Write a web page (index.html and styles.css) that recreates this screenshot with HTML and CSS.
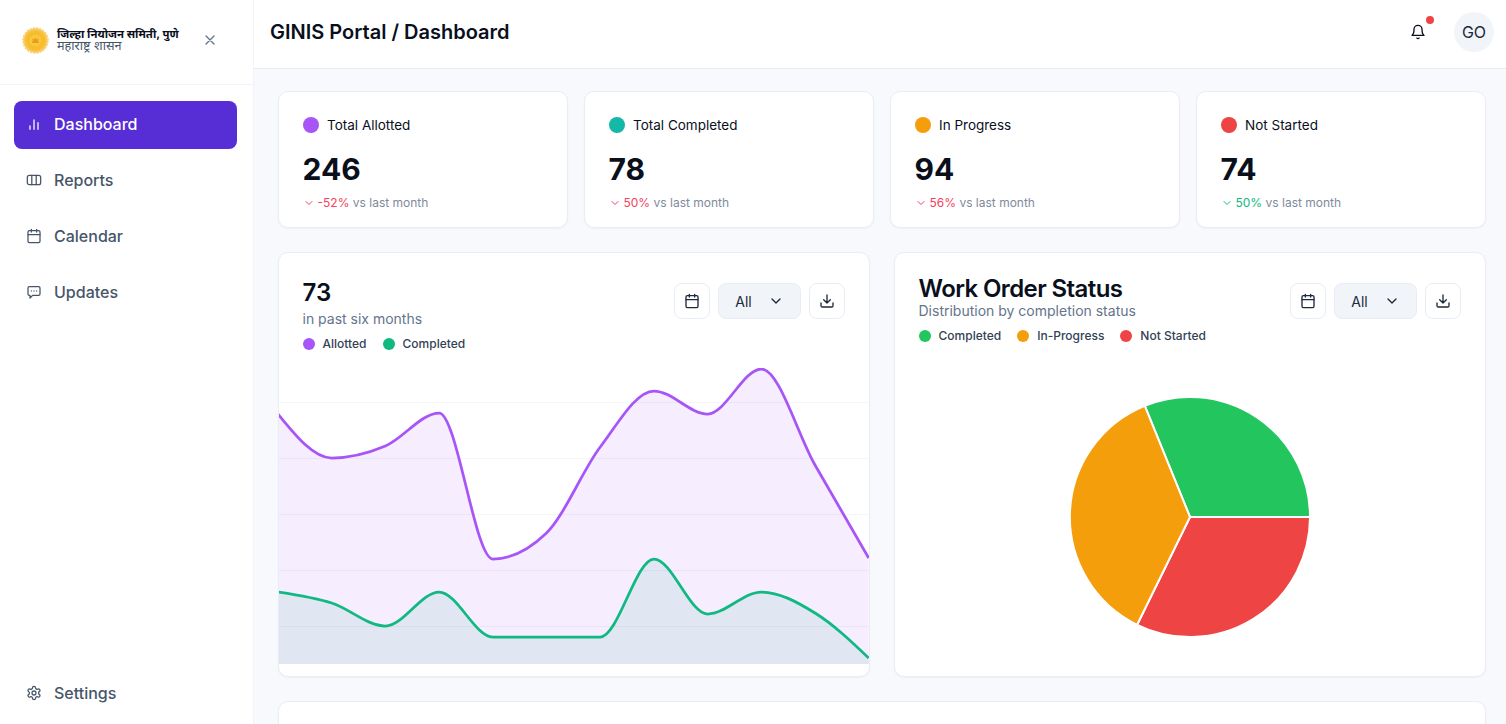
FILE: index.html
```html
<!DOCTYPE html>
<html lang="en">
<head>
    <meta charset="UTF-8">
    <meta name="viewport" content="width=device-width, initial-scale=1.0">
    <title>GINIS Portal / Dashboard</title>
    <link rel="stylesheet" href="styles.css">
</head>
<body>
    <svg class="sprite" xmlns="http://www.w3.org/2000/svg">
        <symbol id="i-bars" viewBox="0 0 24 24"><path d="M18 20v-10M12 20V6M6 20v-5"/></symbol>
        <symbol id="i-columns" viewBox="0 0 24 24"><rect x="2" y="5" width="20" height="14" rx="3"/><path d="M8.700 5v14M15.300 5v14"/></symbol>
        <symbol id="i-calendar" viewBox="0 0 24 24"><rect x="3" y="4" width="18" height="18" rx="2"/><path d="M8 2v4M16 2v4M3 10h18"/></symbol>
        <symbol id="i-message" viewBox="0 0 24 24"><path d="M21 15a2 2 0 0 1-2 2h-9l-4 4v-4H5a2 2 0 0 1-2-2V6a2 2 0 0 1 2-2h14a2 2 0 0 1 2 2z"/><path d="M8 10.500h.01M12 10.500h.01M16 10.500h.01"/></symbol>
        <symbol id="i-settings" viewBox="0 0 24 24"><path d="M12.220 2h-.44a2 2 0 0 0-2 2v.18a2 2 0 0 1-1 1.730l-.43.25a2 2 0 0 1-2 0l-.15-.08a2 2 0 0 0-2.730.73l-.22.38a2 2 0 0 0 .73 2.730l.15.1a2 2 0 0 1 1 1.720v.51a2 2 0 0 1-1 1.740l-.15.09a2 2 0 0 0-.73 2.730l.22.38a2 2 0 0 0 2.730.73l.15-.08a2 2 0 0 1 2 0l.43.25a2 2 0 0 1 1 1.730V20a2 2 0 0 0 2 2h.44a2 2 0 0 0 2-2v-.18a2 2 0 0 1 1-1.730l.43-.25a2 2 0 0 1 2 0l.15.08a2 2 0 0 0 2.730-.73l.22-.39a2 2 0 0 0-.73-2.730l-.15-.08a2 2 0 0 1-1-1.740v-.5a2 2 0 0 1 1-1.740l.15-.09a2 2 0 0 0 .73-2.730l-.22-.38a2 2 0 0 0-2.730-.73l-.15.08a2 2 0 0 1-2 0l-.43-.25a2 2 0 0 1-1-1.730V4a2 2 0 0 0-2-2z"/><circle cx="12" cy="12" r="3"/></symbol>
        <symbol id="i-bell" viewBox="0 0 24 24"><path d="M6 8a6 6 0 0 1 12 0c0 7 3 9 3 9H3s3-2 3-9"/><path d="M10.300 21a1.940 1.940 0 0 0 3.400 0"/></symbol>
        <symbol id="i-download" viewBox="0 0 24 24"><path d="M21 15v4a2 2 0 0 1-2 2H5a2 2 0 0 1-2-2v-4"/><path d="M7 10l5 5 5-5M12 15V3"/></symbol>
        <symbol id="i-chevron" viewBox="0 0 24 24"><path d="M6 9l6 6 6-6"/></symbol>
        <symbol id="i-close" viewBox="0 0 24 24"><path d="M18 6L6 18M6 6l12 12"/></symbol>
    </svg>

    <div class="app">
        <aside class="sidebar">
            <div class="brand">
                <svg class="brand-logo" viewBox="0 0 26 26">
                    <circle cx="13" cy="13" r="11.800" fill="#f8c64e" stroke="#f9d27e" stroke-width="2" stroke-dasharray="2 1.100"/>
                    <circle cx="13" cy="13" r="9.500" fill="#f7bd2c"/>
                    <circle cx="13" cy="13" r="5.500" fill="#f9c93f"/>
                    <path d="M9.500 15.500h7l-1-2.500 1-2-2 1-1.500-2-1.500 2-2-1 1 2z" fill="#ec9a20"/>
                </svg>
                <div class="brand-text">
                    <div class="brand-name">जिल्हा नियोजन समिती, पुणे</div>
                    <div class="brand-sub">महाराष्ट्र शासन</div>
                </div>
                <svg class="icon brand-close"><use href="#i-close"/></svg>
            </div>
            <nav class="nav">
                <a class="nav-item active"><svg class="icon"><use href="#i-bars"/></svg>Dashboard</a>
                <a class="nav-item"><svg class="icon"><use href="#i-columns"/></svg>Reports</a>
                <a class="nav-item"><svg class="icon"><use href="#i-calendar"/></svg>Calendar</a>
                <a class="nav-item"><svg class="icon"><use href="#i-message"/></svg>Updates</a>
            </nav>
            <a class="nav-item settings"><svg class="icon"><use href="#i-settings"/></svg>Settings</a>
        </aside>

        <div class="main">
            <header class="topbar">
                <h1>GINIS Portal / Dashboard</h1>
                <div class="topbar-right">
                    <div class="bell">
                        <svg class="icon"><use href="#i-bell"/></svg>
                        <span class="bell-dot"></span>
                    </div>
                    <div class="avatar">GO</div>
                </div>
            </header>

            <div class="content">
                <section class="stats">
                    <div class="card stat">
                        <div class="stat-label"><span class="dot dot-lg purple"></span>Total Allotted</div>
                        <div class="stat-value">246</div>
                        <div class="stat-note"><svg class="icon down"><use href="#i-chevron"/></svg><span class="down">-52%</span> vs last month</div>
                    </div>
                    <div class="card stat">
                        <div class="stat-label"><span class="dot dot-lg teal"></span>Total Completed</div>
                        <div class="stat-value">78</div>
                        <div class="stat-note"><svg class="icon down"><use href="#i-chevron"/></svg><span class="down">50%</span> vs last month</div>
                    </div>
                    <div class="card stat">
                        <div class="stat-label"><span class="dot dot-lg amber"></span>In Progress</div>
                        <div class="stat-value">94</div>
                        <div class="stat-note"><svg class="icon down"><use href="#i-chevron"/></svg><span class="down">56%</span> vs last month</div>
                    </div>
                    <div class="card stat">
                        <div class="stat-label"><span class="dot dot-lg red"></span>Not Started</div>
                        <div class="stat-value">74</div>
                        <div class="stat-note"><svg class="icon up"><use href="#i-chevron"/></svg><span class="up">50%</span> vs last month</div>
                    </div>
                </section>

                <section class="charts">
                    <div class="card chart">
                        <div class="chart-head">
                            <div>
                                <div class="chart-number">73</div>
                                <div class="chart-sub">in past six months</div>
                                <div class="legend">
                                    <span class="legend-item"><span class="dot purple"></span>Allotted</span>
                                    <span class="legend-item"><span class="dot emerald"></span>Completed</span>
                                </div>
                            </div>
                            <div class="tools">
                                <button class="tool"><svg class="icon"><use href="#i-calendar"/></svg></button>
                                <button class="tool tool-select">All<svg class="icon"><use href="#i-chevron"/></svg></button>
                                <button class="tool"><svg class="icon"><use href="#i-download"/></svg></button>
                            </div>
                        </div>
                        <svg class="area-chart" viewBox="279 368 590 296" width="590" height="296">
                            <path class="area-purple" d="M278 414C295.900 436 313.800 458 331.700 458C349.600 458 367.500 453.500 385.400 446C403.300 438.500 421.200 413 439.100 413C457 413 474.900 559 492.800 559C510.700 559 528.600 550.330 546.500 533C564.400 515.670 582.300 470.670 600.200 447C618.100 423.330 636 391 653.900 391C671.800 391 689.700 414 707.600 414C725.500 414 743.400 369 761.300 369C779.200 369 797.100 433.500 815 465C832.900 496.500 850.800 527.250 868.700 558V664H278Z"/>
                            <path class="area-green" d="M278 592C295.900 594.670 313.800 597.330 331.700 603C349.600 608.670 367.500 626 385.400 626C403.300 626 421.200 592 439.100 592C457 592 474.900 637 492.800 637L600.200 637C618.100 637 636 559 653.900 559C671.800 559 689.700 614 707.600 614C725.500 614 743.400 592 761.300 592C779.200 592 797.100 602 815 613C832.900 624 850.800 641 868.700 658V664H278Z"/>
                            <path class="grid" d="M279 402.500H869M279 458.500H869M279 514.500H869M279 570.500H869M279 626.500H869"/>
                            <path class="line-purple" d="M278 414C295.900 436 313.800 458 331.700 458C349.600 458 367.500 453.500 385.400 446C403.300 438.500 421.200 413 439.100 413C457 413 474.900 559 492.800 559C510.700 559 528.600 550.330 546.500 533C564.400 515.670 582.300 470.670 600.200 447C618.100 423.330 636 391 653.900 391C671.800 391 689.700 414 707.600 414C725.500 414 743.400 369 761.300 369C779.200 369 797.100 433.500 815 465C832.900 496.500 850.800 527.250 868.700 558"/>
                            <path class="line-green" d="M278 592C295.900 594.670 313.800 597.330 331.700 603C349.600 608.670 367.500 626 385.400 626C403.300 626 421.200 592 439.100 592C457 592 474.900 637 492.800 637L600.200 637C618.100 637 636 559 653.900 559C671.800 559 689.700 614 707.600 614C725.500 614 743.400 592 761.300 592C779.200 592 797.100 602 815 613C832.900 624 850.800 641 868.700 658"/>
                        </svg>
                    </div>

                    <div class="card chart">
                        <div class="chart-head">
                            <div>
                                <h2 class="chart-title">Work Order Status</h2>
                                <div class="chart-sub">Distribution by completion status</div>
                                <div class="legend">
                                    <span class="legend-item"><span class="dot green"></span>Completed</span>
                                    <span class="legend-item"><span class="dot amber"></span>In-Progress</span>
                                    <span class="legend-item"><span class="dot red"></span>Not Started</span>
                                </div>
                            </div>
                            <div class="tools">
                                <button class="tool"><svg class="icon"><use href="#i-calendar"/></svg></button>
                                <button class="tool tool-select">All<svg class="icon"><use href="#i-chevron"/></svg></button>
                                <button class="tool"><svg class="icon"><use href="#i-download"/></svg></button>
                            </div>
                        </div>
                        <div class="pie-wrap">
                            <svg class="pie" viewBox="-122 -122 244 244" width="244" height="244">
                                <path fill="#22c55e" d="M0 0L-45.200-111.200A120 120 0 0 1 120 0Z"/>
                                <path fill="#ef4444" d="M0 0L120 0A120 120 0 0 1-52.900 107.800Z"/>
                                <path fill="#f59e0b" d="M0 0L-52.900 107.800A120 120 0 0 1-45.200-111.200Z"/>
                            </svg>
                        </div>
                    </div>
                </section>

                <section class="card bottom-card"></section>
            </div>
        </div>
    </div>
</body>
</html>
```
FILE: styles.css
```css
* {
    box-sizing: border-box;
}
html, body {
    height: 724px;
    overflow: hidden;
}
body {
    margin: 0;
    font-family: Inter, "Noto Sans", "Noto Sans Devanagari", sans-serif;
    background-color: #f8f9fc;
    color: #0a0f1c;
}
.sprite {
    display: none;
}
.icon {
    width: 16px;
    height: 16px;
    flex: none;
    fill: none;
    stroke: currentColor;
    stroke-width: 2;
    stroke-linecap: round;
    stroke-linejoin: round;
}
.app {
    display: flex;
    height: 724px;
    overflow: hidden;
}

/* sidebar */
.sidebar {
    width: 254px;
    flex: none;
    display: flex;
    flex-direction: column;
    background-color: #fff;
    border-right: 1px solid #f1f5f9;
}
.brand {
    height: 85px;
    flex: none;
    display: flex;
    align-items: center;
    padding: 0 35px 4px 22px;
    border-bottom: 1px solid #f1f5f9;
}
.brand-logo {
    width: 27px;
    height: 27px;
    flex: none;
    margin-right: 8px;
}
.brand-text {
    flex: 1;
    min-width: 0;
    line-height: 12px;
}
.brand-name {
    font-size: 11.400px;
    font-weight: 700;
    white-space: nowrap;
}
.brand-sub {
    font-size: 12.700px;
    color: #475569;
    white-space: nowrap;
}
.brand-close {
    color: #64748b;
}
.nav {
    display: flex;
    flex-direction: column;
    gap: 8px;
    padding: 16px 16px 0 14px;
}
.nav-item {
    display: flex;
    align-items: center;
    gap: 12px;
    height: 48px;
    padding: 0 12px 2px;
    border-radius: 8px;
    font-size: 16px;
    font-weight: 500;
    color: #475569;
}
.nav-item .icon {
    stroke-width: 1.900;
}
.nav-item.active {
    background-color: #572dd6;
    color: #fff;
}
.settings {
    margin: auto 16px 6px 14px;
}

/* top bar */
.main {
    flex: 1;
    min-width: 0;
    height: 724px;
    overflow: hidden;
}
.topbar {
    height: 69px;
    display: flex;
    align-items: center;
    justify-content: space-between;
    padding: 0 12px 5px 16px;
    background-color: #fff;
    border-bottom: 1px solid #e8ebf0;
}
.topbar h1 {
    margin: 0;
    font-size: 20px;
    font-weight: 600;
}
.topbar-right {
    display: flex;
    align-items: center;
    gap: 28px;
}
.bell {
    position: relative;
    display: flex;
}
.bell-dot {
    position: absolute;
    top: -8px;
    right: -8px;
    width: 8px;
    height: 8px;
    border-radius: 50%;
    background-color: #ef4444;
}
.avatar {
    width: 40px;
    height: 40px;
    display: flex;
    align-items: center;
    justify-content: center;
    border-radius: 50%;
    background-color: #f1f5f9;
    font-size: 16px;
    color: #1e293b;
}

/* cards */
.content {
    display: flex;
    flex-direction: column;
    gap: 24px;
    padding: 22px 20px 0 24px;
}
.card {
    background-color: #fff;
    border: 1px solid #eaedf3;
    border-radius: 10px;
    box-shadow: 0 1px 2px rgba(15, 23, 42, 0.04);
}
.stats {
    display: grid;
    grid-template-columns: repeat(4, 1fr);
    gap: 16px;
}
.stat {
    height: 137px;
    padding: 23px 23.500px 0;
}
.stat-label {
    display: flex;
    align-items: center;
    gap: 8.500px;
    height: 20px;
    font-size: 13.500px;
    font-weight: 400;
}
.stat-value {
    margin-top: 16px;
    font-size: 30px;
    line-height: 36px;
    font-weight: 700;
}
.stat-note {
    display: flex;
    align-items: center;
    margin-top: 8px;
    font-size: 12px;
    line-height: 16px;
    color: #7f8a9c;
    white-space: pre;
}
.stat-note .icon {
    width: 12px;
    height: 12px;
    margin-right: 3px;
}
.down {
    color: #f43f5e;
}
.up {
    color: #10b981;
}
.dot {
    display: inline-block;
    width: 12px;
    height: 12px;
    flex: none;
    border-radius: 50%;
}
.dot-lg {
    width: 16px;
    height: 16px;
}
.purple { background-color: #a855f7; }
.teal { background-color: #14b8a6; }
.amber { background-color: #f59e0b; }
.red { background-color: #ef4444; }
.emerald { background-color: #10b981; }
.green { background-color: #22c55e; }

/* charts */
.charts {
    display: grid;
    grid-template-columns: repeat(2, 1fr);
    gap: 24px;
}
.chart {
    height: 425px;
    display: flex;
    flex-direction: column;
}
.chart-head {
    height: 115px;
    flex: none;
    display: flex;
    justify-content: space-between;
    align-items: flex-start;
    padding: 24px 24px 0 23.500px;
}
.chart-number {
    font-size: 24px;
    line-height: 32px;
    font-weight: 600;
}
.chart-title {
    margin: 0;
    font-size: 24px;
    line-height: 24px;
    font-weight: 600;
    letter-spacing: -0.6px;
}
.chart-sub {
    font-size: 14px;
    line-height: 20px;
    color: #64748b;
}
.legend {
    display: flex;
    gap: 16px;
    margin-top: 7px;
    font-size: 12px;
    font-weight: 500;
    line-height: 16px;
    color: #334155;
}
.legend-item {
    display: flex;
    align-items: center;
    gap: 8px;
}
.tools {
    display: flex;
    gap: 8px;
    margin-top: 6px;
}
.tool {
    width: 36px;
    height: 36px;
    display: flex;
    align-items: center;
    justify-content: center;
    padding: 0;
    background-color: #fff;
    border: 1px solid #e8edf5;
    border-radius: 8px;
    color: #1e293b;
    font-family: inherit;
    font-size: 14px;
}
.tool-select {
    width: 83px;
    gap: 16px;
    background-color: #f1f5f9;
}
.area-chart {
    display: block;
}
.area-purple {
    fill: #f6edfe;
}
.area-green {
    fill: #e0e6f2;
}
.grid {
    fill: none;
    stroke: #64748b;
    stroke-opacity: 0.07;
}
.line-purple, .line-green {
    fill: none;
    stroke-width: 2.750;
}
.line-purple {
    stroke: #a855f7;
}
.line-green {
    stroke: #10b981;
}
.pie-wrap {
    display: flex;
    justify-content: center;
    padding-top: 26.500px;
}
.pie path {
    stroke: #fff;
    stroke-width: 2;
}
.bottom-card {
    height: 200px;
}
```
